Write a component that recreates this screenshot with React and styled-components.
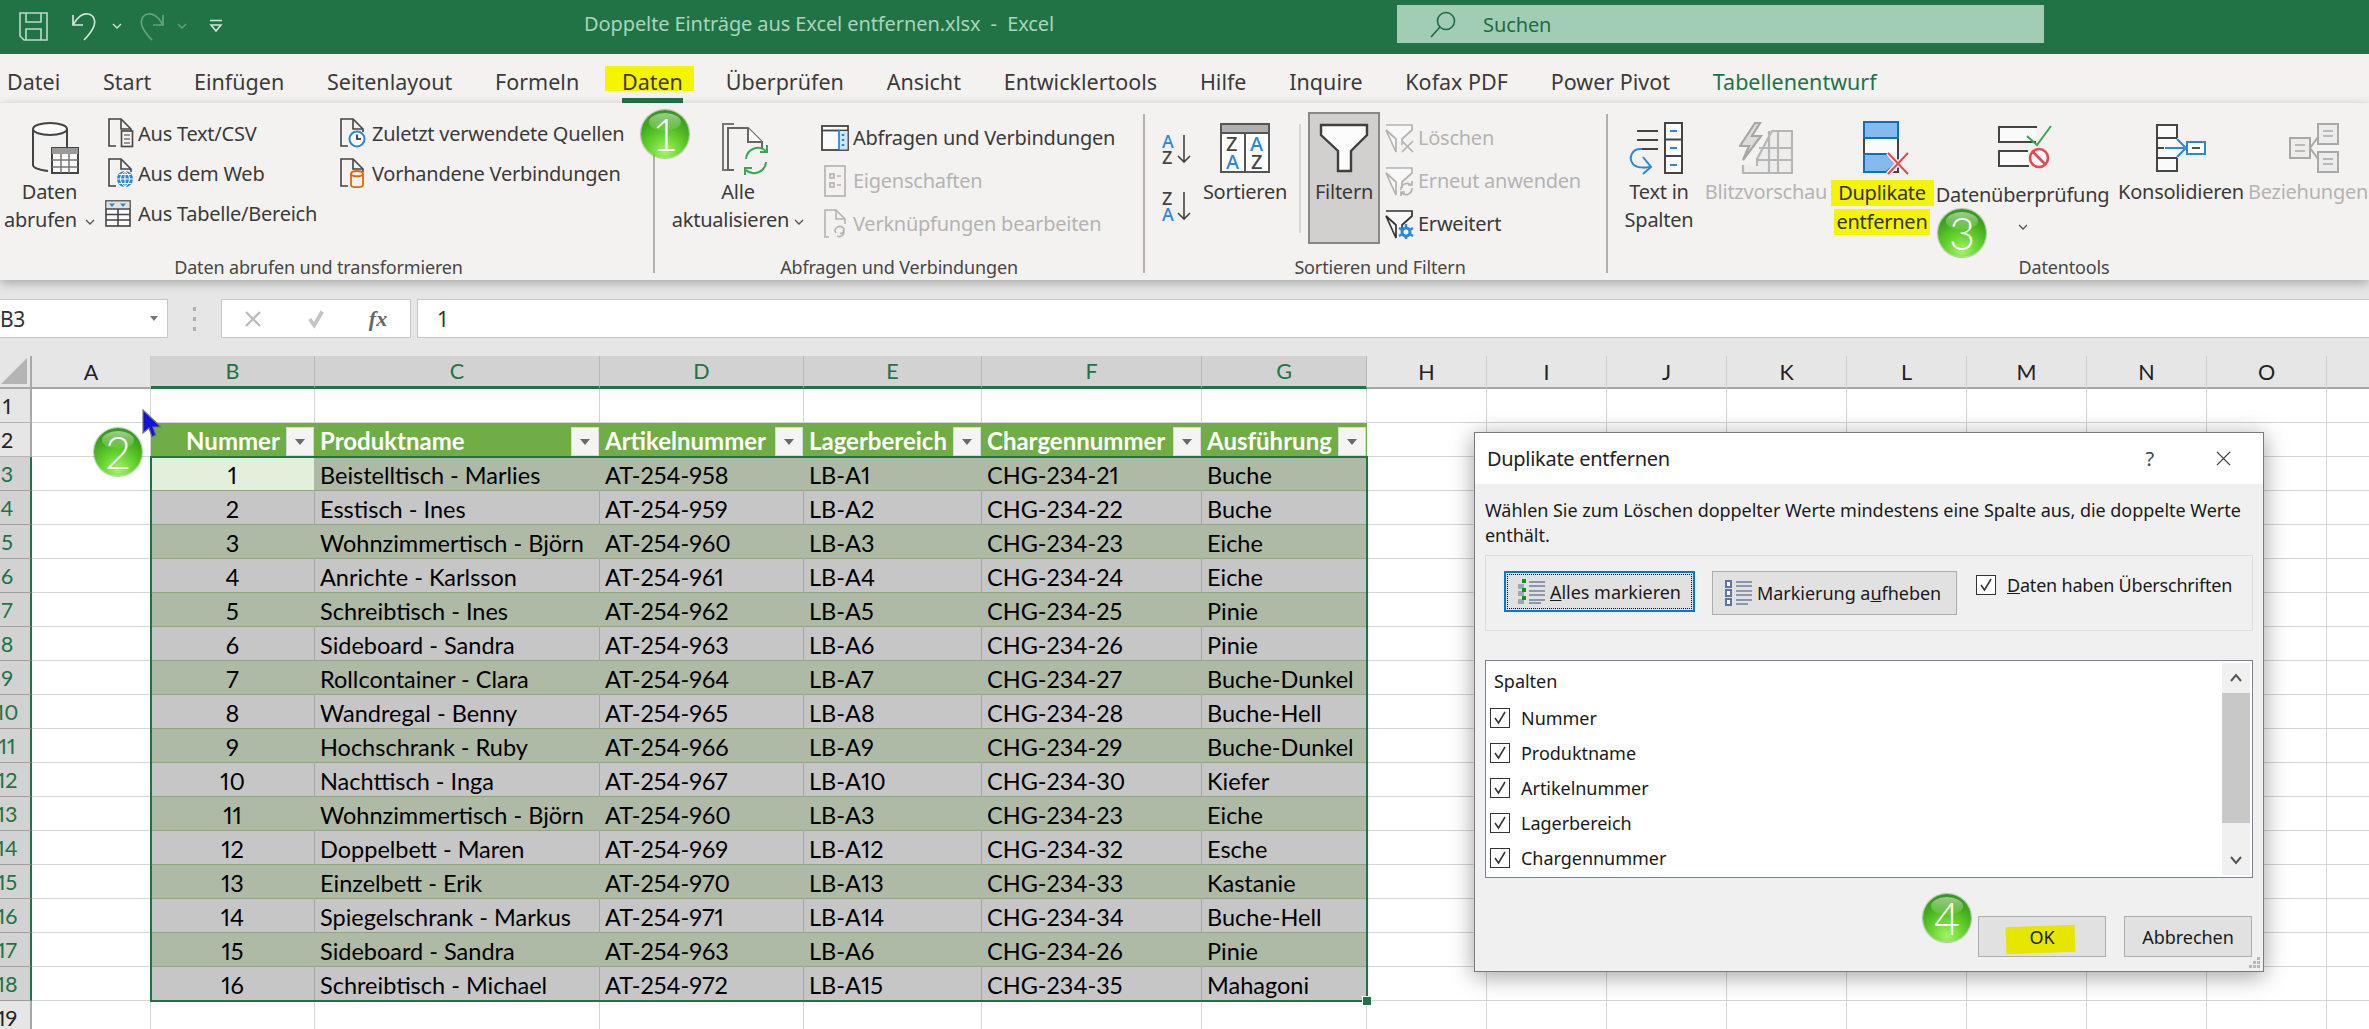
import React from "react";
import styled, { createGlobalStyle } from "styled-components";

const UI = '"Noto Sans", "Open Sans", sans-serif';
const CELL = 'Lato, "Liberation Sans", sans-serif';
const DARK = "#444444";
const BLUE = "#2b88d8";
const OFF = "#b5b3b1";

const Global = createGlobalStyle`
  html, body { margin: 0; padding: 0; background: #fff; }
  * { box-sizing: border-box; }
`;

const Page = styled.div`
  position: relative; width: 2369px; height: 1029px; overflow: hidden;
  display: flex; flex-direction: column; background: #fff; font-family: ${UI};
`;

/* ---------- title bar ---------- */
const TitleBar = styled.header`
  height: 54px; flex: none; background: #217346; display: flex; align-items: center;
`;
const Qat = styled.div`
  width: 584px; flex: none; padding-left: 19px; display: flex; align-items: center; padding-bottom: 2px;
`;
const QatSlot = styled.span`
  display: flex; margin-left: ${p => p.$ml || 0}px; opacity: ${p => p.$dim ? 0.4 : 1};
`;
const Title = styled.div`
  width: 813px; flex: none; color: #a9d4bd; font-size: 20px; letter-spacing: -0.1px; white-space: pre; padding-bottom: 8px;
`;
const Search = styled.div`
  width: 647px; height: 38px; flex: none; align-self: flex-start; margin-top: 5px; background: #a0cdb4;
  display: flex; align-items: center; padding-left: 33px; gap: 27px; color: #1f6b43; font-size: 20px; letter-spacing: -0.1px;
`;

/* ---------- tabs ---------- */
const Tabs = styled.nav`
  height: 49px; flex: none; background: #f3f2f1; display: flex; gap: 42.8px; padding-left: 7px;
`;
const Tab = styled.div`
  position: relative; height: 49px; padding-top: 11px; line-height: 34px; font-size: 21.5px;
  color: ${p => p.$contextual ? "#217346" : "#3b3a39"}; white-space: nowrap;
`;
const TabMark = styled.span`
  position: absolute; left: -17px; right: -11px; top: 12px; height: 25px; background: #f5f500; z-index: 0;
`;
const TabLabel = styled.span`position: relative; z-index: 1;`;
const TabLine = styled.span`
  position: absolute; left: 0; right: 0; bottom: 0; height: 5px; background: #217346;
`;

/* ---------- ribbon ---------- */
const Ribbon = styled.section`
  position: relative; z-index: 2; height: 177px; flex: none; background: #f3f2f1; display: flex;
  box-shadow: 0 3px 10px rgba(0,0,0,.28);
`;
const Group = styled.div`
  width: ${p => p.$w}px; flex: none; display: grid; grid-template-rows: 151px 26px;
`;
const GroupBody = styled.div`display: flex; align-items: flex-start;`;
const GroupLabel = styled.div`
  text-align: center; font-size: 18px; letter-spacing: -0.15px; color: #484644; line-height: 26px;
  padding-right: ${p => p.$pr || 0}px;
`;
const GroupSep = styled.div`
  width: 2px; height: 159px; margin-top: 11px; flex: none; background: #b3b0ad;
`;
const InnerSep = styled.div`
  width: 2px; height: 109px; margin: 21px 7px 0 13px; flex: none; background: #d8d6d4;
`;
const Large = styled.div`
  width: ${p => p.$w}px; flex: none; padding-top: 15px; margin-left: ${p => p.$ml || 0}px;
  display: flex; flex-direction: column; align-items: center; text-align: center; white-space: nowrap;
  font-size: 20px; line-height: 28px; letter-spacing: -0.25px; color: ${p => p.$off ? OFF : "#3b3a39"};
`;
const PressedLarge = styled(Large)`
  height: 132px; margin-top: 9px; padding-top: 4px; background: #d2d0ce; border: 2px solid #8a8886;
`;
const IconSlot = styled.div`
  height: 60px; display: flex; align-items: center; justify-content: center;
  padding-right: ${p => p.$pr || 0}px; padding-left: ${p => p.$pl || 0}px;
`;
const Nudge = styled.div`margin-top: ${p => p.$mt}px;`;
const ChevWrap = styled.span`display: inline-flex; margin-left: ${p => p.$ml || 8}px; vertical-align: middle;`;
const Mark = styled.span`
  display: block; background: #f5f500; color: #333; height: 26px; line-height: 25px;
  width: ${p => p.$w}px; margin: 2px auto 1px;
`;
const SmallCol = styled.div`
  width: ${p => p.$w}px; flex: none; padding-top: ${p => p.$pt}px; margin-left: ${p => p.$ml || 0}px;
  display: flex; flex-direction: column;
`;
const Small = styled.div`
  height: ${p => p.$h}px; display: flex; align-items: center; white-space: nowrap;
  font-size: 20px; letter-spacing: -0.25px; color: ${p => p.$off ? OFF : "#3b3a39"};
`;
const SmallIcon = styled.span`
  width: ${p => p.$w || 33}px; flex: none; display: flex; align-items: center;
  padding-left: ${p => p.$pl || 0}px;
`;
const SortCol = styled.div`
  width: 59px; flex: none; padding: 30px 0 0 17px; display: flex; flex-direction: column; gap: 24px;
`;

/* ---------- formula bar ---------- */
const FormulaArea = styled.div`
  height: 76px; flex: none; background: #e6e6e6; padding-top: 19px; display: flex; align-items: flex-start;
`;
const NameBox = styled.div`
  width: 168px; height: 39px; background: #fff; border: 1px solid #c8c6c4; border-left: 0;
  display: flex; align-items: center; justify-content: space-between; padding-right: 9px;
  font-size: 21px; color: #333; letter-spacing: -0.3px;
`;
const Dots = styled.div`
  width: 53px; height: 39px; display: flex; align-items: center; justify-content: center;
`;
const FxButtons = styled.div`
  width: 190px; height: 39px; background: #fff; border: 1px solid #c8c6c4;
  display: grid; grid-template-columns: 62px 64px 60px; align-items: center; justify-items: center;
`;
const FxText = styled.span`
  font-family: "Liberation Serif", serif; font-style: italic; font-size: 22px; color: #666; font-weight: 700;
`;
const FormulaInput = styled.div`
  flex: 1; height: 39px; margin-left: 6px; background: #fff; border: 1px solid #c8c6c4; border-right: 0;
  padding-left: 19px; display: flex; align-items: center; font-size: 21px; color: #333;
`;

/* ---------- sheet ---------- */
const Sheet = styled.div`
  position: relative; flex: none; display: grid; font-family: ${CELL}; font-size: 23.5px; color: #000;
  font-variant-numeric: proportional-nums;
  grid-template-columns: 32px 119px 164px 285px 204px 178px 220px 165px 120px repeat(8, 120px);
  grid-template-rows: 33px repeat(19, 34px);
`;
const Corner = styled.div`
  background: #e6e6e6; border-right: 2px solid #a8a8a8; border-bottom: 2px solid #a8a8a8;
  display: flex; align-items: flex-end; justify-content: flex-end; padding: 0 3px 3px 0;
`;
const ColHead = styled.div`
  display: flex; align-items: center; justify-content: center; font-size: 21.5px;
  background: ${p => p.$on ? "#d2d2d2" : "#e6e6e6"}; color: ${p => p.$on ? "#217346" : "#222"};
  border-right: 1px solid ${p => p.$on ? "#b8b8b8" : "#cfcfcf"};
  border-bottom: ${p => p.$on ? "3px solid #217346" : "2px solid #a8a8a8"};
`;
const RowHead = styled.div`
  display: flex; align-items: center; padding-right: 16px; justify-content: center;
  font-size: 21.5px; background: ${p => p.$on ? "#d2d2d2" : "#e6e6e6"}; color: ${p => p.$on ? "#217346" : "#222"};
  border-right: ${p => p.$on ? "2px solid #217346" : "2px solid #a8a8a8"};
  border-bottom: 1px solid ${p => p.$on ? "#9e9e9e" : "#b4b4b4"};
`;
const Blank = styled.div`border-right: 1px solid #d4d4d4; border-bottom: 1px solid #d4d4d4;`;
const HeadCell = styled.div`
  background: #70ad47; color: #fff; font-weight: 700; font-size: 24px; display: flex; align-items: center;
  justify-content: ${p => p.$center ? "center" : "flex-start"};
  padding: 2px 31px 0 ${p => p.$center ? 31 : 5}px; position: relative; white-space: nowrap;
  border-bottom: 1px solid #70ad47;
`;
const FilterBtn = styled.span`
  position: absolute; right: 1px; top: 4px; width: 28px; height: 29px; background: #f4f4f4;
  border: 1px solid #d8d8d8; display: flex; align-items: center; justify-content: center;
`;
const FilterTri = styled.span`
  width: 0; height: 0; border-left: 5px solid transparent; border-right: 5px solid transparent; border-top: 6px solid #6a6a6a;
`;
const Cell = styled.div`
  display: flex; align-items: center; white-space: nowrap; overflow: hidden; padding-top: 2px;
  justify-content: ${p => p.$center ? "center" : "flex-start"}; padding-left: ${p => p.$center ? 0 : 5}px;
  background: ${p => p.$active ? "#e2efda" : p.$band ? "#aeb9a6" : "#c6c6c6"};
  border-bottom: 1px solid #8fa77f;
  border-right: 1px solid ${p => p.$band || p.$active ? "#aeb9a6" : "#a6a6a6"};
`;
const Selection = styled.div`
  position: absolute; grid-column: 3 / 9; grid-row: 4 / 20; inset: -1px; z-index: 1;
  border: 2px solid #217346; pointer-events: none;
`;
const Handle = styled.span`
  position: absolute; right: -5px; bottom: -5px; width: 8px; height: 8px; background: #217346; outline: 1px solid #fff;
`;

/* ---------- overlays ---------- */
const Badge = styled.div`
  position: absolute; z-index: 5; left: ${p => p.$x}px; top: ${p => p.$y}px; width: 48px; height: 48px; border-radius: 50%;
  background: radial-gradient(circle at 50% 88%, #a2f565 0%, #62cf2b 38%, #3fa71c 68%, #2c8a14 100%);
  box-shadow: 0 0 1px 1px rgba(40,90,30,.35);
  display: flex; align-items: center; justify-content: center; color: #fff;
  font-family: Lato, sans-serif; font-weight: 300; font-size: 45px; line-height: 1;
  &::before {
    content: ""; position: absolute; left: 8px; right: 8px; top: 3px; height: 18px; border-radius: 50%;
    background: linear-gradient(rgba(255,255,255,.5), rgba(255,255,255,.06));
  }
`;
const BadgeNum = styled.span`position: relative;`;
const Cursor = styled.svg`position: absolute; z-index: 6; left: 141px; top: 409px;`;

/* ---------- dialog ---------- */
const Dialog = styled.div`
  position: absolute; z-index: 4; left: 1474px; top: 432px; width: 790px; height: 540px; background: #f0f0f0;
  border: 1px solid #7a7a7a; box-shadow: 0 4px 22px rgba(0,0,0,.38); display: flex; flex-direction: column;
  font-size: 18px; letter-spacing: -0.03px; color: #1a1a1a;
`;
const DialogHead = styled.div`
  height: 51px; flex: none; background: #fff; display: flex; align-items: center; padding: 0 32px 0 12px;
  font-size: 20px; letter-spacing: -0.3px; color: #222;
`;
const DialogTitle = styled.div`flex: 1;`;
const Help = styled.span`font-size: 20px; color: #444; margin-right: 62px;`;
const Intro = styled.p`margin: 0; padding: 14px 10px 0; line-height: 25px; height: 71px; flex: none;`;
const OptionBox = styled.div`
  height: 76px; margin: 0 10px; border: 1px solid #dcdcdc; display: flex; padding: 15px 0 0 18px; flex: none; align-items: flex-start;
`;
const PushBtn = styled.div`
  height: ${p => p.$h}px; width: ${p => p.$w}px; flex: none; display: flex; align-items: center;
  background: #e1e1e1; padding-left: 12px; gap: 4px; white-space: nowrap;
  border: ${p => p.$focus ? "2px solid #0078d7" : "1px solid #adadad"};
  outline: ${p => p.$focus ? "1px dotted #111" : "none"}; outline-offset: -4px;
  margin-right: ${p => p.$mr || 0}px;
`;
const Check = styled.span`
  width: 20px; height: 20px; flex: none; background: #fff; border: 1px solid #333;
  display: flex; align-items: center; justify-content: center;
`;
const HeaderCheck = styled.label`
  display: flex; align-items: center; gap: 11px; margin-top: 4px; height: 20px; white-space: nowrap; letter-spacing: -0.2px;
`;
const U = styled.span`text-decoration: underline;`;
const ListBox = styled.div`
  position: relative; height: 218px; margin: 29px 10px 0; border: 1px solid #7a8594; background: #fff; flex: none;
  display: flex; flex-direction: column;
`;
const ListHead = styled.div`height: 39px; padding: 8px 0 0 8px; flex: none; line-height: 24px;`;
const ListItem = styled.label`
  height: 35px; flex: none; display: flex; align-items: center; gap: 11px; padding-left: 4px;
`;
const Scroll = styled.div`
  position: absolute; right: 2px; top: 2px; bottom: 2px; width: 28px; background: #f0f0f0;
  display: flex; flex-direction: column; align-items: center; justify-content: space-between;
`;
const ScrollEnd = styled.span`height: 30px; display: flex; align-items: center; justify-content: center;`;
const Thumb = styled.span`position: absolute; left: 0; right: 0; top: 30px; height: 130px; background: #c8c8c8;`;
const DialogFoot = styled.div`
  flex: none; display: flex; justify-content: flex-end; gap: 18px; padding: 38px 11px 0 0;
`;
const FootBtn = styled.div`
  position: relative; width: 128px; height: 41px; background: #e1e1e1; border: 1px solid #adadad;
  display: flex; align-items: center; justify-content: center;
`;
const OkMark = styled.span`
  position: absolute; left: 27px; top: 9px; width: 69px; height: 27px; background: #e6e600; transform: rotate(-2deg);
`;
const OkText = styled.span`position: relative;`;
const Grip = styled.svg`position: absolute; right: 2px; bottom: 2px;`;

/* ---------- icons ---------- */
const Chev = ({ c = "#555" }) => (
  <svg width="10" height="6" viewBox="0 0 10 6"><path d="M1 1l4 4 4-4" fill="none" stroke={c} strokeWidth="1.3" /></svg>
);
const SaveIcon = () => (
  <svg width="29" height="29" viewBox="0 0 29 29" fill="none" stroke="#bcd9c9" strokeWidth="1.6">
    <path d="M1 1h27v27H5l-4-4z" /><path d="M7 1v9h15V1M7 28V17h15v11" />
  </svg>
);
const UndoIcon = () => (
  <svg width="26" height="29" viewBox="0 0 26 29" fill="none" stroke="#d2e6da" strokeWidth="1.7">
    <path d="M1 13C5 5 11 1 16 2c6 1 8 7 6 12-2 5-6 10-10 14" /><path d="M1 3v10h10" />
  </svg>
);
const RedoIcon = () => (
  <svg width="26" height="29" viewBox="0 0 26 29" fill="none" stroke="#d2e6da" strokeWidth="1.7">
    <path d="M25 13C21 5 15 1 10 2 4 3 2 9 4 14c2 5 6 10 10 14" /><path d="M25 3v10H15" />
  </svg>
);
const CustomizeIcon = () => (
  <svg width="14" height="14" viewBox="0 0 14 14" fill="none" stroke="#d2e6da" strokeWidth="1.5">
    <path d="M1 1.5h12M2 6l5 6 5-6z" />
  </svg>
);
const SearchIcon = () => (
  <svg width="26" height="27" viewBox="0 0 26 27" fill="none" stroke="#1f6b43" strokeWidth="1.6">
    <circle cx="16" cy="10" r="8.5" /><path d="M10 16L1 26" />
  </svg>
);
const DbIcon = () => (
  <svg width="48" height="53" viewBox="0 0 48 53" fill="none" stroke={DARK} strokeWidth="2">
    <ellipse cx="18" cy="7" rx="17" ry="6" fill="#fbfbfb" />
    <path d="M1 7v36c0 3 7 5 15 6M35 7v18" />
    <rect x="20" y="26" width="26" height="25" fill="#fafafa" />
    <rect x="20" y="26" width="26" height="6" fill="#9a9a9a" stroke="none" />
    <path d="M29 32v19M37 32v19M20 38h26M20 45h26" stroke="#777" strokeWidth="1.5" />
  </svg>
);
const Doc = ({ children, c = DARK }) => (
  <svg width="26" height="30" viewBox="0 0 26 30" fill="none" stroke={c} strokeWidth="1.6">
    <path d="M8 28H1V1h12l10 10v3" /><path d="M13 1v10h10" />
    {children}
  </svg>
);
const CsvIcon = () => (
  <Doc><rect x="13.5" y="13" width="11" height="15.5" fill="#f3f2f1" /><path d="M16 17h6M16 21h6M16 25h6" stroke="#777" /></Doc>
);
const WebIcon = () => (
  <Doc><circle cx="17" cy="21" r="8" fill={BLUE} stroke="none" /><path d="M9 21h16M17 13v16M11 16.5h12M11 25.5h12M17 13c-6 5-6 11 0 16M17 13c6 5 6 11 0 16" stroke="#fff" strokeWidth="1" /></Doc>
);
const ClockIcon = () => (
  <Doc><circle cx="17" cy="21" r="7.5" fill="#fff" stroke={BLUE} strokeWidth="2" /><path d="M17 16.5V21h4" stroke="#222" /></Doc>
);
const DbSmallIcon = () => (
  <Doc><path d="M11 16c0-4 12-4 12 0v11c0 3-12 3-12 0z" fill="#f3f2f1" stroke="#d96c00" strokeWidth="1.8" /><path d="M11 16c0 3 12 3 12 0" stroke="#d96c00" strokeWidth="1.8" /></Doc>
);
const TableIcon = () => (
  <svg width="26" height="27" viewBox="0 0 26 27" fill="none" stroke="#444" strokeWidth="1.6">
    <rect x="1" y="1" width="24" height="25" fill="#fafafa" />
    <rect x="1.5" y="1.5" width="23" height="7" fill="#e2e2e2" stroke="none" />
    <path d="M4 3.5h6l-3 3.5zM15 3.5h6l-3 3.5z" fill={BLUE} stroke="none" />
    <path d="M1 9h24M1 14.5h24M1 20h24M13 9v17" />
  </svg>
);
const RefreshIcon = () => (
  <svg width="48" height="53" viewBox="0 0 48 53" fill="none">
    <path d="M12 2H1v46h6" stroke="#777" strokeWidth="2" />
    <path d="M12 48H6V6h20l14 14v6" stroke="#666" strokeWidth="2" />
    <path d="M26 6v14h14" stroke="#666" strokeWidth="2" fill="#fff" />
    <path d="M24 37a12 12 0 0 1 20-8M44 40a12 12 0 0 1-20 8" stroke="#3aa655" strokeWidth="2" />
    <path d="M45 23v7h-7M23 53v-7h7" stroke="#3aa655" strokeWidth="2" />
  </svg>
);
const QueriesIcon = () => (
  <svg width="28" height="26" viewBox="0 0 28 26" fill="none" stroke={DARK} strokeWidth="1.8">
    <rect x="1" y="1" width="26" height="24" fill="#fbfbfb" />
    <path d="M1 5.5h26" />
    <rect x="19" y="6" width="7.5" height="18.5" fill="#cfe4f7" stroke="none" />
    <path d="M18 5v20" stroke={BLUE} />
    <path d="M22 9v2M22 14v2M22 19v2" stroke={BLUE} strokeWidth="2.5" />
  </svg>
);
const PropsIcon = () => (
  <svg width="22" height="32" viewBox="0 0 22 32" fill="none" stroke={OFF} strokeWidth="1.7">
    <rect x="1" y="1" width="20" height="30" /><rect x="6" y="9" width="4" height="4" /><rect x="6" y="18" width="4" height="4" /><path d="M13 11h4M13 20h4" />
  </svg>
);
const LinksIcon = () => (
  <svg width="26" height="30" viewBox="0 0 26 30" fill="none" stroke={OFF} strokeWidth="1.6">
    <path d="M5 28H1V1h11l9 9v5" /><path d="M12 1v9h9" />
    <path d="M12 24c-3-4 2-8 6-6 4 2 1 8-2 6M19 21c3 4-2 8-6 6" />
  </svg>
);
const SortText = styled.text`font-family: ${UI}; font-size: ${p => p.$s}px; font-weight: 500;`;
const SortIcon = ({ top, bottom }) => (
  <svg width="30" height="33" viewBox="0 0 30 33" fill="none">
    <SortText $s={18} x="0" y="15" fill={top === "A" ? BLUE : DARK}>{top}</SortText>
    <SortText $s={18} x="0" y="31" fill={bottom === "A" ? BLUE : DARK}>{bottom}</SortText>
    <path d="M22 2v27M16 23l6 6 6-6" stroke={DARK} strokeWidth="1.6" />
  </svg>
);
const SortBigIcon = () => (
  <svg width="50" height="50" viewBox="0 0 50 50" fill="none">
    <rect x="1" y="1" width="48" height="48" fill="#fff" stroke="#555" strokeWidth="2" />
    <rect x="2" y="2" width="46" height="8" fill="#b0b0b0" />
    <path d="M1 10h48M25 10v39" stroke="#555" strokeWidth="2" />
    <SortText $s={20} x="6" y="28" fill={DARK}>Z</SortText>
    <SortText $s={20} x="6" y="46" fill={BLUE}>A</SortText>
    <SortText $s={20} x="30" y="28" fill={BLUE}>A</SortText>
    <SortText $s={20} x="31" y="46" fill={DARK}>Z</SortText>
  </svg>
);
const FunnelIcon = () => (
  <svg width="50" height="50" viewBox="0 0 50 50">
    <path d="M2 2h46v10L32 28v20H19V28L2 12z" fill="#fcfcfc" stroke="#3f3f3f" strokeWidth="2.4" />
  </svg>
);
const SmallFunnel = ({ c, children }) => (
  <svg width="30" height="30" viewBox="0 0 30 30" fill="none" stroke={c} strokeWidth="1.7">
    <path d="M1 2h26v5l-10 9v6M11 29V16L1 7z" fill="#f8f8f8" />
    {children}
  </svg>
);
const ClearFunnel = () => <SmallFunnel c={OFF}><path d="M17 18l11 11M28 18L17 29" /></SmallFunnel>;
const ReapplyFunnel = () => (
  <SmallFunnel c={OFF}><path d="M16 24a6 6 0 0 1 10-5M27 22a6 6 0 0 1-10 5M27 15v4h-4M16 30v-4h4" /></SmallFunnel>
);
const AdvFunnel = () => (
  <SmallFunnel c="#333">
    <circle cx="21" cy="23" r="4" fill="#f3f2f1" stroke={BLUE} strokeWidth="3" />
    <path d="M21 15v3M21 28v3M14 19l2.5 1.5M28 27l-2.5-1.5M14 27l2.5-1.5M28 19l-2.5 1.5" stroke={BLUE} strokeWidth="2.4" />
  </SmallFunnel>
);
const TextColIcon = () => (
  <svg width="54" height="53" viewBox="0 0 54 53" fill="none">
    <rect x="36" y="1" width="17" height="50" fill="#fbfbfb" stroke={DARK} strokeWidth="2" />
    <path d="M36 17.5h17M36 34h17" stroke={DARK} strokeWidth="2" />
    <path d="M41 9h7M41 26h7M41 43h7" stroke={BLUE} strokeWidth="2" />
    <path d="M8 9h21M8 18h21M13 27h16" stroke={DARK} strokeWidth="1.8" />
    <path d="M13 27C3 26-1 36 4 42c3 4 10 4 17 3" stroke={BLUE} strokeWidth="2" />
    <path d="M14 35l8 10-8 7" stroke={BLUE} strokeWidth="2" />
  </svg>
);
const FlashIcon = () => (
  <svg width="54" height="52" viewBox="0 0 54 52" fill="none" stroke="#b8b6b4" strokeWidth="2.2">
    <path d="M18 44V37L33 9h20v42H4v-8" fill="#eeeded" />
    <path d="M20 26h33M18 38h35M30 9v42M39 9v42" />
    <path d="M16 1L1 24h9L4 38l18-24h-9l8-13z" fill="#dcdcdc" stroke="#a9a7a5" />
  </svg>
);
const DupIcon = () => (
  <svg width="48" height="55" viewBox="0 0 48 55" fill="none">
    <rect x="1" y="1" width="34" height="50" fill="#fafafa" stroke="#444" strokeWidth="2" />
    <rect x="1" y="1" width="34" height="16" fill="#84bbec" stroke="#106ebe" strokeWidth="2" />
    <path d="M1 33h22l12 9-12 9H1z" fill="#84bbec" stroke="#106ebe" strokeWidth="2" />
    <path d="M25 32l20 21M45 32L25 53" stroke="#f3f2f1" strokeWidth="5" />
    <path d="M25 32l20 21M45 32L25 53" stroke="#e8474f" strokeWidth="2" />
  </svg>
);
const ValidateIcon = () => (
  <svg width="54" height="46" viewBox="0 0 54 46" fill="none">
    <path d="M38 17H1V2h38" fill="#fafafa" stroke={DARK} strokeWidth="2" />
    <path d="M30 26H1v15h30" fill="#fafafa" stroke={DARK} strokeWidth="2" />
    <path d="M29 11l10 9L53 1" stroke="#3aa655" strokeWidth="2" />
    <circle cx="41" cy="33" r="9" fill="#fafafa" stroke="#e8474f" strokeWidth="2.6" />
    <path d="M35 27l12 12" stroke="#e8474f" strokeWidth="2.6" />
  </svg>
);
const ConsolidateIcon = () => (
  <svg width="50" height="48" viewBox="0 0 50 48" fill="none">
    <path d="M21 14V1H1v46h20V34" fill="#fafafa" stroke={DARK} strokeWidth="2" />
    <path d="M1 14h20M1 34h20M1 24h7" stroke={DARK} strokeWidth="2" />
    <path d="M9 24h19M21 15l9 9-9 9" stroke={BLUE} strokeWidth="2" />
    <rect x="31" y="18" width="18" height="12" fill="#fff" stroke={BLUE} strokeWidth="2" />
    <path d="M36 24h8" stroke="#555" strokeWidth="2" />
  </svg>
);
const RelationIcon = () => (
  <svg width="50" height="50" viewBox="0 0 50 50" fill="none" stroke="#aaa8a6" strokeWidth="2">
    <rect x="29" y="1" width="20" height="20" fill="#ececec" /><rect x="29" y="29" width="20" height="20" fill="#ececec" /><rect x="1" y="15" width="20" height="20" fill="#ececec" />
    <path d="M21 25l8-11M21 25l8 11" />
    <path d="M34 8h10M34 13h10M34 36h10M34 41h10M6 22h10M6 28h10" strokeWidth="1.6" />
  </svg>
);
const Triangle = () => (
  <svg width="26" height="26" viewBox="0 0 26 26"><path d="M26 0v26H0z" fill="#b4b4b4" /></svg>
);
const CloseX = ({ c = "#bdbdbd", s = 16, w = 2.4 }) => (
  <svg width={s} height={s} viewBox="0 0 16 16"><path d="M1 1l14 14M15 1L1 15" stroke={c} strokeWidth={w} fill="none" /></svg>
);
const CheckMark = ({ c = "#333", s = 16, w = 1.5 }) => (
  <svg width={s} height={s} viewBox="0 0 16 16"><path d="M3 8l3.5 5L13 2" stroke={c} strokeWidth={w} fill="none" /></svg>
);
const SelectAllIcon = () => (
  <svg width="28" height="26" viewBox="0 0 28 26" fill="none">
    <path d="M11 3h16M11 7h16M11 12h16M11 16h16M11 21h16M11 24h12" stroke="#6d7f9c" strokeWidth="1.6" />
    <rect x="0" y="5" width="6" height="5" fill="#9aa8b8" /><rect x="0" y="12" width="6" height="5" fill="#9aa8b8" /><rect x="0" y="20" width="6" height="5" fill="#9aa8b8" />
    <rect x="4" y="0" width="4" height="4" fill="#169116" /><rect x="4" y="9" width="4" height="4" fill="#169116" /><rect x="4" y="17" width="4" height="4" fill="#169116" />
  </svg>
);
const DeselectIcon = () => (
  <svg width="28" height="26" viewBox="0 0 28 26" fill="none">
    <path d="M11 2h16M11 6h16M11 11h16M11 15h16M11 20h16M11 24h12" stroke="#6d7f9c" strokeWidth="1.6" />
    <g fill="#fff" stroke="#5e75a0" strokeWidth="2"><rect x="1" y="1" width="5" height="6" /><rect x="1" y="10" width="5" height="6" /><rect x="1" y="19" width="5" height="6" /></g>
  </svg>
);
const Arrow = ({ up }) => (
  <svg width="12" height="10" viewBox="0 0 12 10"><path d={up ? "M1 8l5-6 5 6" : "M1 2l5 6 5-6"} stroke="#555" strokeWidth="2" fill="none" /></svg>
);
const GripIcon = () => (
  <Grip width="12" height="12" viewBox="0 0 12 12" fill="#b8b8b8">
    <rect x="8" y="0" width="3" height="3" /><rect x="4" y="4" width="3" height="3" /><rect x="8" y="4" width="3" height="3" />
    <rect x="0" y="8" width="3" height="3" /><rect x="4" y="8" width="3" height="3" /><rect x="8" y="8" width="3" height="3" />
  </Grip>
);

/* ---------- data ---------- */
const TABS = ["Datei", "Start", "Einfügen", "Seitenlayout", "Formeln", "Daten", "Überprüfen", "Ansicht", "Entwicklertools", "Hilfe", "Inquire", "Kofax PDF", "Power Pivot", "Tabellenentwurf"];
const COLS = ["A", "B", "C", "D", "E", "F", "G", "H", "I", "J", "K", "L", "M", "N", "O", "P"];
const HEADERS = ["Nummer", "Produktname", "Artikelnummer", "Lagerbereich", "Chargennummer", "Ausführung"];
const DATA = [
  ["Beistelltisch - Marlies", "AT-254-958", "LB-A1", "CHG-234-21", "Buche"],
  ["Esstisch - Ines", "AT-254-959", "LB-A2", "CHG-234-22", "Buche"],
  ["Wohnzimmertisch - Björn", "AT-254-960", "LB-A3", "CHG-234-23", "Eiche"],
  ["Anrichte - Karlsson", "AT-254-961", "LB-A4", "CHG-234-24", "Eiche"],
  ["Schreibtisch - Ines", "AT-254-962", "LB-A5", "CHG-234-25", "Pinie"],
  ["Sideboard - Sandra", "AT-254-963", "LB-A6", "CHG-234-26", "Pinie"],
  ["Rollcontainer - Clara", "AT-254-964", "LB-A7", "CHG-234-27", "Buche-Dunkel"],
  ["Wandregal - Benny", "AT-254-965", "LB-A8", "CHG-234-28", "Buche-Hell"],
  ["Hochschrank - Ruby", "AT-254-966", "LB-A9", "CHG-234-29", "Buche-Dunkel"],
  ["Nachttisch - Inga", "AT-254-967", "LB-A10", "CHG-234-30", "Kiefer"],
  ["Wohnzimmertisch - Björn", "AT-254-960", "LB-A3", "CHG-234-23", "Eiche"],
  ["Doppelbett - Maren", "AT-254-969", "LB-A12", "CHG-234-32", "Esche"],
  ["Einzelbett - Erik", "AT-254-970", "LB-A13", "CHG-234-33", "Kastanie"],
  ["Spiegelschrank - Markus", "AT-254-971", "LB-A14", "CHG-234-34", "Buche-Hell"],
  ["Sideboard - Sandra", "AT-254-963", "LB-A6", "CHG-234-26", "Pinie"],
  ["Schreibtisch - Michael", "AT-254-972", "LB-A15", "CHG-234-35", "Mahagoni"],
];
const LIST = ["Nummer", "Produktname", "Artikelnummer", "Lagerbereich", "Chargennummer"];
const TRAILING = COLS.slice(7);

const blanks = (key) => TRAILING.map(c => <Blank key={key + c} />);

export default function App() {
  return (
    <Page>
      <Global />
      <TitleBar>
        <Qat>
          <QatSlot><SaveIcon /></QatSlot>
          <QatSlot $ml={24}><UndoIcon /></QatSlot>
          <QatSlot $ml={14}><Chev c="#d2e6da" /></QatSlot>
          <QatSlot $ml={16} $dim><RedoIcon /></QatSlot>
          <QatSlot $ml={13} $dim><Chev c="#d2e6da" /></QatSlot>
          <QatSlot $ml={22}><CustomizeIcon /></QatSlot>
        </Qat>
        <Title>Doppelte Einträge aus Excel entfernen.xlsx  -  Excel</Title>
        <Search><SearchIcon /><span>Suchen</span></Search>
      </TitleBar>

      <Tabs>
        {TABS.map(t => (
          <Tab key={t} $contextual={t === "Tabellenentwurf"}>
            {t === "Daten" && <TabMark />}
            <TabLabel>{t}</TabLabel>
            {t === "Daten" && <TabLine />}
          </Tab>
        ))}
      </Tabs>

      <Ribbon>
        <Group $w={653}>
          <GroupBody>
            <Large $w={99}>
              <IconSlot $pl={12}><DbIcon /></IconSlot>
              <span>Daten</span>
              <span>abrufen<ChevWrap><Chev /></ChevWrap></span>
            </Large>
            <SmallCol $w={235} $pt={10} $ml={6}>
              <Small $h={40}><SmallIcon $pl={3}><CsvIcon /></SmallIcon>Aus Text/CSV</Small>
              <Small $h={40}><SmallIcon $pl={3}><WebIcon /></SmallIcon>Aus dem Web</Small>
              <Small $h={40}><SmallIcon><TableIcon /></SmallIcon>Aus Tabelle/Bereich</Small>
            </SmallCol>
            <SmallCol $w={310} $pt={10}>
              <Small $h={40}><SmallIcon $w={32}><ClockIcon /></SmallIcon>Zuletzt verwendete Quellen</Small>
              <Small $h={40}><SmallIcon $w={32}><DbSmallIcon /></SmallIcon>Vorhandene Verbindungen</Small>
            </SmallCol>
          </GroupBody>
          <GroupLabel $pr={16}>Daten abrufen und transformieren</GroupLabel>
        </Group>
        <GroupSep />
        <Group $w={488}>
          <GroupBody>
            <Large $w={166}>
              <IconSlot $pl={16}><RefreshIcon /></IconSlot>
              <span>Alle</span>
              <span>aktualisieren<ChevWrap $ml={5}><Chev /></ChevWrap></span>
            </Large>
            <SmallCol $w={320} $pt={13}>
              <Small $h={43}><SmallIcon $w={32}><QueriesIcon /></SmallIcon>Abfragen und Verbindungen</Small>
              <Small $h={43} $off><SmallIcon $w={32} $pl={3}><PropsIcon /></SmallIcon>Eigenschaften</Small>
              <Small $h={43} $off><SmallIcon $w={32} $pl={3}><LinksIcon /></SmallIcon>Verknüpfungen bearbeiten</Small>
            </SmallCol>
          </GroupBody>
          <GroupLabel>Abfragen und Verbindungen</GroupLabel>
        </Group>
        <GroupSep />
        <Group $w={461}>
          <GroupBody>
            <SortCol>
              <SortIcon top="A" bottom="Z" />
              <SortIcon top="Z" bottom="A" />
            </SortCol>
            <Large $w={82}>
              <IconSlot><SortBigIcon /></IconSlot>
              <span>Sortieren</span>
            </Large>
            <InnerSep />
            <PressedLarge $w={72}>
              <IconSlot><FunnelIcon /></IconSlot>
              <span>Filtern</span>
            </PressedLarge>
            <SmallCol $w={230} $pt={13} $ml={5}>
              <Small $h={43} $off><SmallIcon><ClearFunnel /></SmallIcon>Löschen</Small>
              <Small $h={43} $off><SmallIcon><ReapplyFunnel /></SmallIcon>Erneut anwenden</Small>
              <Small $h={43}><SmallIcon><AdvFunnel /></SmallIcon>Erweitert</Small>
            </SmallCol>
          </GroupBody>
          <GroupLabel>Sortieren und Filtern</GroupLabel>
        </Group>
        <GroupSep />
        <Group $w={912}>
          <GroupBody>
            <Large $w={92} $ml={5}>
              <IconSlot $pr={6}><TextColIcon /></IconSlot>
              <span>Text in</span>
              <span>Spalten</span>
            </Large>
            <Large $w={122} $off>
              <IconSlot><FlashIcon /></IconSlot>
              <span>Blitzvorschau</span>
            </Large>
            <Large $w={110}>
              <IconSlot $pl={10}><DupIcon /></IconSlot>
              <Mark $w={103}>Duplikate</Mark>
              <Mark $w={96}>entfernen</Mark>
            </Large>
            <Large $w={171}>
              <IconSlot $pl={4}><ValidateIcon /></IconSlot>
              <Nudge $mt={3}>Datenüberprüfung</Nudge>
              <span><Chev /></span>
            </Large>
            <Large $w={146}>
              <IconSlot><ConsolidateIcon /></IconSlot>
              <span>Konsolidieren</span>
            </Large>
            <Large $w={108} $off>
              <IconSlot $pl={12}><RelationIcon /></IconSlot>
              <span>Beziehungen</span>
            </Large>
          </GroupBody>
          <GroupLabel>Datentools</GroupLabel>
        </Group>
      </Ribbon>

      <FormulaArea>
        <NameBox><span>B3</span><svg width="8" height="5" viewBox="0 0 8 5"><path d="M0 0h8L4 5z" fill="#777" /></svg></NameBox>
        <Dots>
          <svg width="4" height="26" viewBox="0 0 4 26" fill="#b0b0b0"><rect y="1" width="3" height="4" /><rect y="11" width="3" height="4" /><rect y="21" width="3" height="4" /></svg>
        </Dots>
        <FxButtons>
          <CloseX />
          <CheckMark c="#c4c4c4" s={20} w={3} />
          <FxText>fx</FxText>
        </FxButtons>
        <FormulaInput>1</FormulaInput>
      </FormulaArea>

      <Sheet>
        <Corner><Triangle /></Corner>
        {COLS.map(c => <ColHead key={c} $on={"BCDEFG".includes(c)}>{c}</ColHead>)}

        <RowHead>1</RowHead>
        <Blank /><Blank /><Blank /><Blank /><Blank /><Blank /><Blank />
        {blanks("r1")}

        <RowHead>2</RowHead>
        <Blank />
        {HEADERS.map((h, i) => (
          <HeadCell key={h} $center={i === 0}>{h}<FilterBtn><FilterTri /></FilterBtn></HeadCell>
        ))}
        {blanks("r2")}

        {DATA.map((row, i) => (
          <React.Fragment key={i}>
            <RowHead $on>{i + 3}</RowHead>
            <Blank />
            <Cell $center $band={i % 2 === 0} $active={i === 0}>{i + 1}</Cell>
            {row.map((v, j) => <Cell key={j} $band={i % 2 === 0}>{v}</Cell>)}
            {blanks("d" + i)}
          </React.Fragment>
        ))}

        <RowHead>19</RowHead>
        <Blank /><Blank /><Blank /><Blank /><Blank /><Blank /><Blank />
        {blanks("r19")}

        <Selection><Handle /></Selection>
      </Sheet>

      <Dialog>
        <DialogHead>
          <DialogTitle>Duplikate entfernen</DialogTitle>
          <Help>?</Help>
          <CloseX c="#333" s={15} w={1.3} />
        </DialogHead>
        <Intro>Wählen Sie zum Löschen doppelter Werte mindestens eine Spalte aus, die doppelte Werte<br />enthält.</Intro>
        <OptionBox>
          <PushBtn $w={191} $h={41} $focus $mr={17}><SelectAllIcon /><span><U>A</U>lles markieren</span></PushBtn>
          <PushBtn $w={245} $h={44} $mr={19}><DeselectIcon /><span>Markierung a<U>u</U>fheben</span></PushBtn>
          <HeaderCheck><Check><CheckMark /></Check><span><U>D</U>aten haben Überschriften</span></HeaderCheck>
        </OptionBox>
        <ListBox>
          <ListHead>Spalten</ListHead>
          {LIST.map(l => <ListItem key={l}><Check><CheckMark /></Check>{l}</ListItem>)}
          <Scroll>
            <ScrollEnd><Arrow up /></ScrollEnd>
            <Thumb />
            <ScrollEnd><Arrow /></ScrollEnd>
          </Scroll>
        </ListBox>
        <DialogFoot>
          <FootBtn><OkMark /><OkText>OK</OkText></FootBtn>
          <FootBtn>Abbrechen</FootBtn>
        </DialogFoot>
        <GripIcon />
      </Dialog>

      <Badge $x={641} $y={110}><BadgeNum>1</BadgeNum></Badge>
      <Badge $x={94} $y={428}><BadgeNum>2</BadgeNum></Badge>
      <Badge $x={1938} $y={209}><BadgeNum>3</BadgeNum></Badge>
      <Badge $x={1923} $y={894}><BadgeNum>4</BadgeNum></Badge>
      <Cursor width="22" height="30" viewBox="0 0 22 30">
        <path d="M2 1v23l6-5 3 9 4-2-3-8h8z" fill="#1212d8" stroke="#777" strokeWidth="1.2" />
      </Cursor>
    </Page>
  );
}
